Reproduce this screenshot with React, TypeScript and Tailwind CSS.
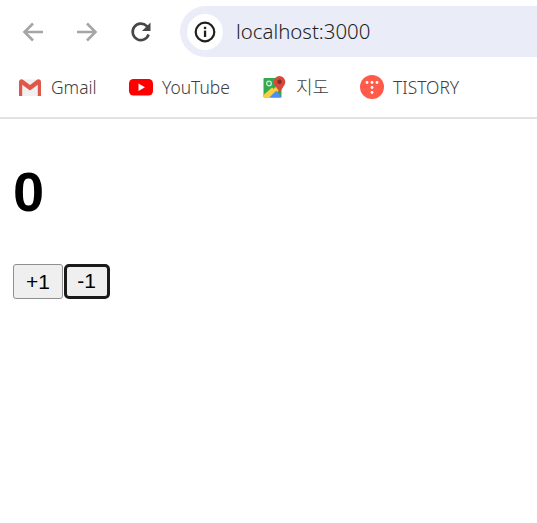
import React from "react";

const ui = { fontFamily: '"Noto Sans", "Noto Sans CJK KR", sans-serif' };

function Back() {
  return (
    <svg width="24" height="24" viewBox="0 0 24 24" fill="none" stroke="#a6a6a6" strokeWidth="2.6">
      <path d="M22 12H4M12 3.500 3.500 12l8.500 8.500" />
    </svg>
  );
}
function Forward() {
  return (
    <svg width="24" height="24" viewBox="0 0 24 24" fill="none" stroke="#a6a6a6" strokeWidth="2.6">
      <path d="M2 12h18M12 3.500 20.500 12 12 20.500" />
    </svg>
  );
}
function Reload() {
  return (
    <svg width="24" height="24" viewBox="0 0 24 24" fill="none">
      <path d="M19.600 14.500A8.200 8.200 0 1 1 17.800 6.200L20 8.500" stroke="#474747" strokeWidth="2.600" />
      <path d="M21.500 2.500V11H13z" fill="#474747" />
    </svg>
  );
}
function Info() {
  return (
    <svg width="22" height="22" viewBox="0 0 22 22" fill="none">
      <circle cx="11" cy="11" r="9.300" stroke="#1f1f1f" strokeWidth="2.200" />
      <rect x="9.900" y="9.600" width="2.300" height="6.400" fill="#1f1f1f" />
      <rect x="9.900" y="5.800" width="2.300" height="2.300" fill="#1f1f1f" />
    </svg>
  );
}
function Gmail() {
  return (
    <svg width="24" height="24" viewBox="0 0 24 24">
      <rect x="2" y="4.500" width="20" height="16.500" rx="1.500" fill="#f0f0f0" />
      <path d="M1 7V21H4.200V9.800L12 15.600l7.800-5.800V21H23V7c0-2.600-2.400-3.300-4-2.200l-7 5.200-7-5.200C3.400 3.700 1 4.400 1 7z" fill="#e0574a" />
    </svg>
  );
}
function YouTube() {
  return (
    <svg width="24" height="24" viewBox="0 0 24 24">
      <rect x="0" y="4" width="24" height="16.500" rx="4.500" fill="#ff0000" />
      <path d="M9.500 8.500v7.500l6.500-3.750z" fill="#ffffff" />
    </svg>
  );
}
function Maps() {
  return (
    <svg width="24" height="24" viewBox="0 0 24 24">
      <rect x="0.500" y="3" width="18" height="19.500" rx="1" fill="#35a853" />
      <path d="M0.500 22.500 18.500 7v6L8 22.500z" fill="#fbd13d" />
      <path d="M6.500 22.500 13 15.500l5.500 7z" fill="#4c8df6" />
      <path d="M0.500 20 9 12.500 13 16 5 22.500H1z" fill="#fbd13d" />
      <circle cx="6" cy="8.500" r="2.300" fill="none" stroke="#c9ecd2" strokeWidth="1.300" />
      <path d="M16.500 1a5.800 5.800 0 0 1 5.800 5.800c0 4-3.800 6.200-5.500 11.700C15 13 10.700 10.800 10.700 6.800A5.800 5.800 0 0 1 16.500 1z" fill="#d6493c" />
      <circle cx="16.500" cy="6.800" r="2.200" fill="#8a2a22" />
    </svg>
  );
}
function Tistory() {
  return (
    <svg width="24" height="24" viewBox="0 0 24 24">
      <circle cx="12" cy="12" r="12" fill="#ff5a4a" />
      <g fill="#ffffff">
        <circle cx="7" cy="7.500" r="1.400" />
        <circle cx="12" cy="7.500" r="1.400" />
        <circle cx="17" cy="7.500" r="1.400" />
        <circle cx="12" cy="12.500" r="1.400" />
        <circle cx="12" cy="17.500" r="1.400" />
      </g>
    </svg>
  );
}

function Bookmark({ icon, label, className, labelClass }: { icon: React.ReactNode; label: string; className: string; labelClass: string }) {
  return (
    <div className={`flex items-center gap-[9px] ${className}`}>
      {icon}
      <span className={`leading-6 font-light text-[#404040] ${labelClass}`}>{label}</span>
    </div>
  );
}

export default function App() {
  return (
    <div className="min-h-[523px] bg-white">
      <header style={ui}>
        <div className="flex h-[63px] items-start pt-[6px]">
          <div className="flex h-[51px] w-[180px] items-center">
            <div className="ml-[21px]"><Back /></div>
            <div className="ml-[30px]"><Forward /></div>
            <div className="ml-[30px]"><Reload /></div>
          </div>
          <div className="flex h-[51px] flex-1 items-center rounded-l-[26px] bg-[#eaedf7] pl-[7px]">
            <div className="flex h-9 w-9 items-center justify-center rounded-full bg-white"><Info /></div>
            <span className="ml-[13px] text-[20.4px] font-light text-[#1f1f1f]">localhost:3000</span>
          </div>
        </div>
        <div className="flex h-[56px] items-center border-b-2 border-[#e2e2e2] pb-[6px] pl-[18px]">
          <Bookmark icon={<Gmail />} label="Gmail" className="w-[111px]" labelClass="text-[17.4px]" />
          <Bookmark icon={<YouTube />} label="YouTube" className="w-[134px]" labelClass="text-[17.4px]" />
          <Bookmark icon={<Maps />} label="지도" className="w-[96px]" labelClass="text-[18px]" />
          <Bookmark icon={<Tistory />} label="TISTORY" className="ml-[1px] w-auto" labelClass="text-[17.4px]" />
        </div>
      </header>
      <main className="pl-[13px]" style={{ fontFamily: '"Liberation Sans", Arial, sans-serif' }}>
        <h1 className="mt-[41px] text-[56px] font-bold leading-[64px] text-black">0</h1>
        <div className="mt-[40px] flex">
          <button className="h-[35px] w-[50px] rounded-[3px] border border-[#8f8f8f] bg-[#efefef] pb-[1px] text-[21px] leading-none text-black">+1</button>
          <button className="ml-[1px] h-[35px] w-[46px] rounded-[5px] border-[3px] border-[#1a1a1a] bg-[#efefef] pb-[2px] pr-[1px] text-[21px] leading-none text-black">-1</button>
        </div>
      </main>
    </div>
  );
}
